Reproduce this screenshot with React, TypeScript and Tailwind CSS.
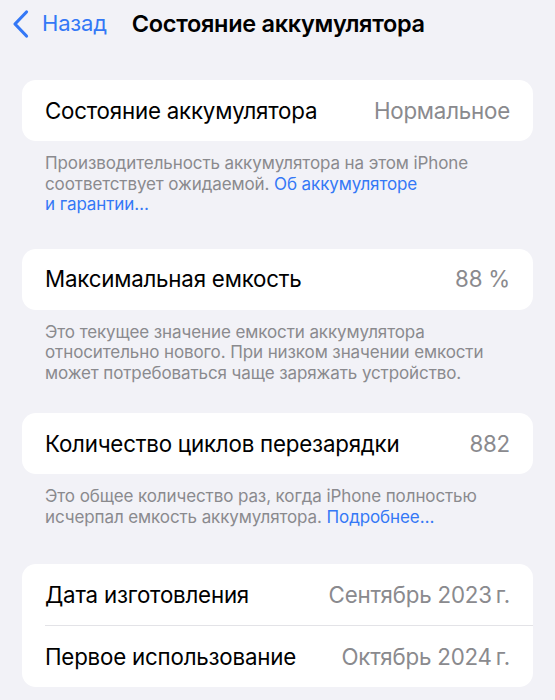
import React from "react";

const font = { fontFamily: "Inter, 'Noto Sans', sans-serif" };

function Row({ label, value }: { label: string; value: string }) {
  return (
    <div className="flex items-center justify-between h-[61px] px-[23px]">
      <span className="text-[22.3px] text-black tracking-[-0.2px]">{label}</span>
      <span className="text-[22.3px] text-[#8a8a8e] tracking-[-0.2px]">{value}</span>
    </div>
  );
}

function Footer({ children }: { children: React.ReactNode }) {
  return (
    <p className="px-[45px] pt-[12px] text-[17px] leading-[20.5px] text-[#8a8a8e] tracking-[-0.1px]">
      {children}
    </p>
  );
}

export default function App() {
  return (
    <div className="w-[555px] h-[700px] bg-[#f2f2f7] overflow-hidden" style={font}>
      <div className="flex items-center h-[47px] pl-[11px]">
        <svg width="20" height="30" viewBox="0 0 20 30" className="mr-[11px]">
          <path d="M15.5 3 L4 15 L15.5 27" fill="none" stroke="#3478f6" strokeWidth="3.2" strokeLinecap="round" strokeLinejoin="round" />
        </svg>
        <span className="text-[22px] text-[#3478f6] tracking-[-0.2px]">Назад</span>
        <span className="ml-[25px] text-[23.5px] font-semibold text-black tracking-[-0.3px]">Состояние аккумулятора</span>
      </div>

      <div className="mt-[33px] mx-[22px] bg-white rounded-[14px]">
        <Row label="Состояние аккумулятора" value="Нормальное" />
      </div>
      <Footer>
        Производительность аккумулятора на этом iPhone соответствует ожидаемой.{" "}
        <span className="text-[#3478f6]">Об аккумуляторе и&nbsp;гарантии…</span>
      </Footer>

      <div className="mt-[34px] mx-[22px] bg-white rounded-[14px]">
        <Row label="Максимальная емкость" value="88 %" />
      </div>
      <Footer>
        Это текущее значение емкости аккумулятора относительно нового. При низком значении емкости может потребоваться чаще заряжать устройство.
      </Footer>

      <div className="mt-[30px] mx-[22px] bg-white rounded-[14px]">
        <Row label="Количество циклов перезарядки" value="882" />
      </div>
      <Footer>
        Это общее количество раз, когда iPhone полностью исчерпал емкость аккумулятора.{" "}
        <span className="text-[#3478f6]">Подробнее…</span>
      </Footer>

      <div className="mt-[37px] mx-[22px] bg-white rounded-[14px]">
        <Row label="Дата изготовления" value={"Сентябрь 2023\u2009г."} />
        <div className="ml-[23px] h-px bg-[#e3e3e7]" />
        <Row label="Первое использование" value={"Октябрь 2024\u2009г."} />
      </div>
    </div>
  );
}
